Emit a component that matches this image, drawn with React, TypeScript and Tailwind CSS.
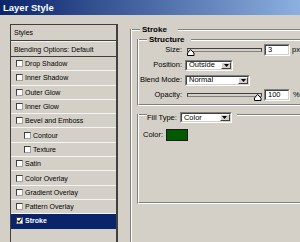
import React from "react";

const etchLine = "h-[2px] border-t border-b border-t-[#808080] border-b-white";

function GroupBox({
  title,
  children,
  className = "",
  bottom = false,
  innerClass = "",
}: {
  title: React.ReactNode;
  children?: React.ReactNode;
  className?: string;
  bottom?: boolean;
  innerClass?: string;
}) {
  return (
    <div className={"flex flex-col " + className}>
      <div className="flex items-start h-[10px] shrink-0">
        <div className={"w-[10px] mt-[4px] shrink-0 " + etchLine} />
        {title}
        <div className={"flex-1 mt-[4px] " + etchLine} />
      </div>
      <div
        className={
          "-mt-[6px] flex-1 flex flex-col border-l border-l-[#808080] " +
          (bottom ? "border-b border-b-white" : "")
        }
      >
        <div
          className={
            "flex-1 flex flex-col border-l border-l-white " +
            (bottom ? "border-b border-b-[#808080] " : "") +
            innerClass
          }
        >
          {children}
        </div>
      </div>
    </div>
  );
}

function Sunken({ className = "", children }: { className?: string; children?: React.ReactNode }) {
  return (
    <div
      className={
        "border-t border-l border-r border-b border-t-[#808080] border-l-[#808080] border-r-white border-b-white " +
        className
      }
    >
      <div className="w-full h-full flex items-center bg-white border-t border-l border-r border-b border-t-[#404040] border-l-[#404040] border-r-[#d4d0c8] border-b-[#d4d0c8]">
        {children}
      </div>
    </div>
  );
}

function Input({ value }: { value: string }) {
  return (
    <Sunken className="w-[26px] h-[12px] shrink-0">
      <span className="pl-[2px] text-[7.5px] leading-none">{value}</span>
    </Sunken>
  );
}

function Select({ value, w }: { value: string; w: string }) {
  return (
    <Sunken className={w + " h-[11px] shrink-0"}>
      <span className="flex-1 pl-[2px] text-[7.5px] leading-none">{value}</span>
      <div className="w-[10px] h-full flex items-center justify-center bg-[#d4d0c8] border-t border-l border-t-white border-l-white border-r border-b border-r-[#404040] border-b-[#404040]">
        <svg width="5" height="3" viewBox="0 0 5 3">
          <polygon points="0,0 5,0 2.5,3" fill="#000" />
        </svg>
      </div>
    </Sunken>
  );
}

function Slider({ thumb }: { thumb: "left" | "right" }) {
  return (
    <div className="relative w-[75px] h-[12px] flex items-center shrink-0">
      <div className="w-full h-[4px] border border-[#404040] border-b-[#808080] bg-[#d4d0c8]" />
      <svg
        width="8"
        height="7"
        viewBox="0 0 8 7"
        className={"absolute top-[5px] " + (thumb === "left" ? "left-0" : "right-0")}
      >
        <polygon points="3.5,0.5 7,4 7,6.5 0.5,6.5 0.5,4" fill="#fff" stroke="#000" strokeWidth="1" />
      </svg>
    </div>
  );
}

function Row({ label, children }: { label: string; children?: React.ReactNode }) {
  return (
    <div className="flex items-center h-[12px]">
      <span className="w-[43px] shrink-0 text-right text-[7.5px] leading-none">{label}</span>
      {children}
    </div>
  );
}

function Checkbox({ checked = false }: { checked?: boolean }) {
  return (
    <div className="w-[7px] h-[7px] shrink-0 bg-white border-t border-l border-t-[#404040] border-l-[#404040] border-r border-b border-r-[#a0a0a0] border-b-[#a0a0a0] flex items-center justify-center">
      {checked && (
        <svg width="5" height="5" viewBox="0 0 5 5">
          <polyline points="0.5,2.5 2,4 4.5,0.5" fill="none" stroke="#000" strokeWidth="1.2" />
        </svg>
      )}
    </div>
  );
}

const items: { label: string; indent?: boolean; selected?: boolean }[] = [
  { label: "Drop Shadow" },
  { label: "Inner Shadow" },
  { label: "Outer Glow" },
  { label: "Inner Glow" },
  { label: "Bevel and Emboss" },
  { label: "Contour", indent: true },
  { label: "Texture", indent: true },
  { label: "Satin" },
  { label: "Color Overlay" },
  { label: "Gradient Overlay" },
  { label: "Pattern Overlay" },
  { label: "Stroke", selected: true },
];

export default function App() {
  return (
    <div className="w-[300px] h-[242px] overflow-hidden flex flex-col bg-[#d4d0c8] text-black font-['Liberation_Sans',Arial,sans-serif]">
      {/* title bar */}
      <div className="h-[15px] shrink-0 flex items-center pl-[3px] bg-[linear-gradient(to_right,#0a246a,#8cb0e0)]">
        <span className="text-white font-bold text-[9.5px] leading-none">Layer Style</span>
      </div>

      <div className="flex-1 flex min-h-0 overflow-hidden">
        {/* left list */}
        <div className="pl-[10px] pt-[9px] shrink-0">
          <div className="w-[108px] h-[240px] flex flex-col border-l border-t border-l-[#404040] border-t-[#404040] border-r-2 border-r-[#404040]">
            <div className="h-[16px] flex items-center pl-[3px] border-b border-b-[#404040]">
              <span className="text-[7px] leading-none">Styles</span>
            </div>
            <div className="h-[16px] flex items-center pl-[3px] border-t border-t-[#f4f4f4] border-b border-b-[#404040]">
              <span className="text-[7px] leading-none">Blending Options: Default</span>
            </div>
            {items.map((it) => (
              <div
                key={it.label}
                className={
                  "h-[14.3px] shrink-0 flex items-center border-b " +
                  (it.indent ? "pl-[13px] " : "pl-[5px] ") +
                  (it.selected
                    ? "bg-[#0a246a] text-white font-bold border-b-transparent"
                    : "border-b-[#f4f4f4]")
                }
              >
                <Checkbox checked={it.selected} />
                <span className="ml-[2px] text-[7px] leading-none">{it.label}</span>
              </div>
            ))}
          </div>
        </div>

        {/* right panel */}
        <div className="ml-[12px] pt-[10px] flex-1 flex flex-col min-w-0">
          <GroupBox
            className="flex-1"
            innerClass="pl-[5px] pt-[6px]"
            title={<span className="pl-[2px] pr-[11px] text-[8px] font-bold leading-[10px]">Stroke</span>}
          >
            <GroupBox
              bottom
              innerClass="pt-[5px] pb-[3px] gap-[3px]"
              title={<span className="pl-[2px] pr-[6px] text-[8px] font-bold leading-[10px]">Structure</span>}
            >
              <Row label="Size:">
                <div className="ml-[5px]">
                  <Slider thumb="left" />
                </div>
                <div className="ml-[2px]">
                  <Input value="3" />
                </div>
                <span className="ml-[2px] text-[7.5px] leading-none">px</span>
              </Row>
              <Row label="Position:">
                <div className="ml-[3px]">
                  <Select value="Outside" w="w-[48px]" />
                </div>
              </Row>
              <Row label="Blend Mode:">
                <div className="ml-[3px]">
                  <Select value="Normal" w="w-[65px]" />
                </div>
              </Row>
              <Row label="Opacity:">
                <div className="ml-[5px]">
                  <Slider thumb="right" />
                </div>
                <div className="ml-[2px]">
                  <Input value="100" />
                </div>
                <span className="ml-[3px] text-[7.5px] leading-none">%</span>
              </Row>
            </GroupBox>

            <GroupBox
              className="mt-[4px]"
              bottom
              innerClass="pt-[15px] pb-[61px] pl-[4px]"
              title={
                <div className="flex items-center mt-[2px] h-[11px] shrink-0">
                  <span className="text-[7.5px] leading-none">Fill Type:</span>
                  <div className="ml-[3px]">
                    <Select value="Color" w="w-[52px]" />
                  </div>
                  <div className="w-[5px]" />
                </div>
              }
            >
              <div className="flex items-center h-[12px]">
                <span className="text-[7.5px] leading-none">Color:</span>
                <div className="ml-[3px] w-[22px] h-[12px] bg-[#005a00] border border-[#1a1a1a]" />
              </div>
            </GroupBox>
          </GroupBox>
        </div>
      </div>
    </div>
  );
}
